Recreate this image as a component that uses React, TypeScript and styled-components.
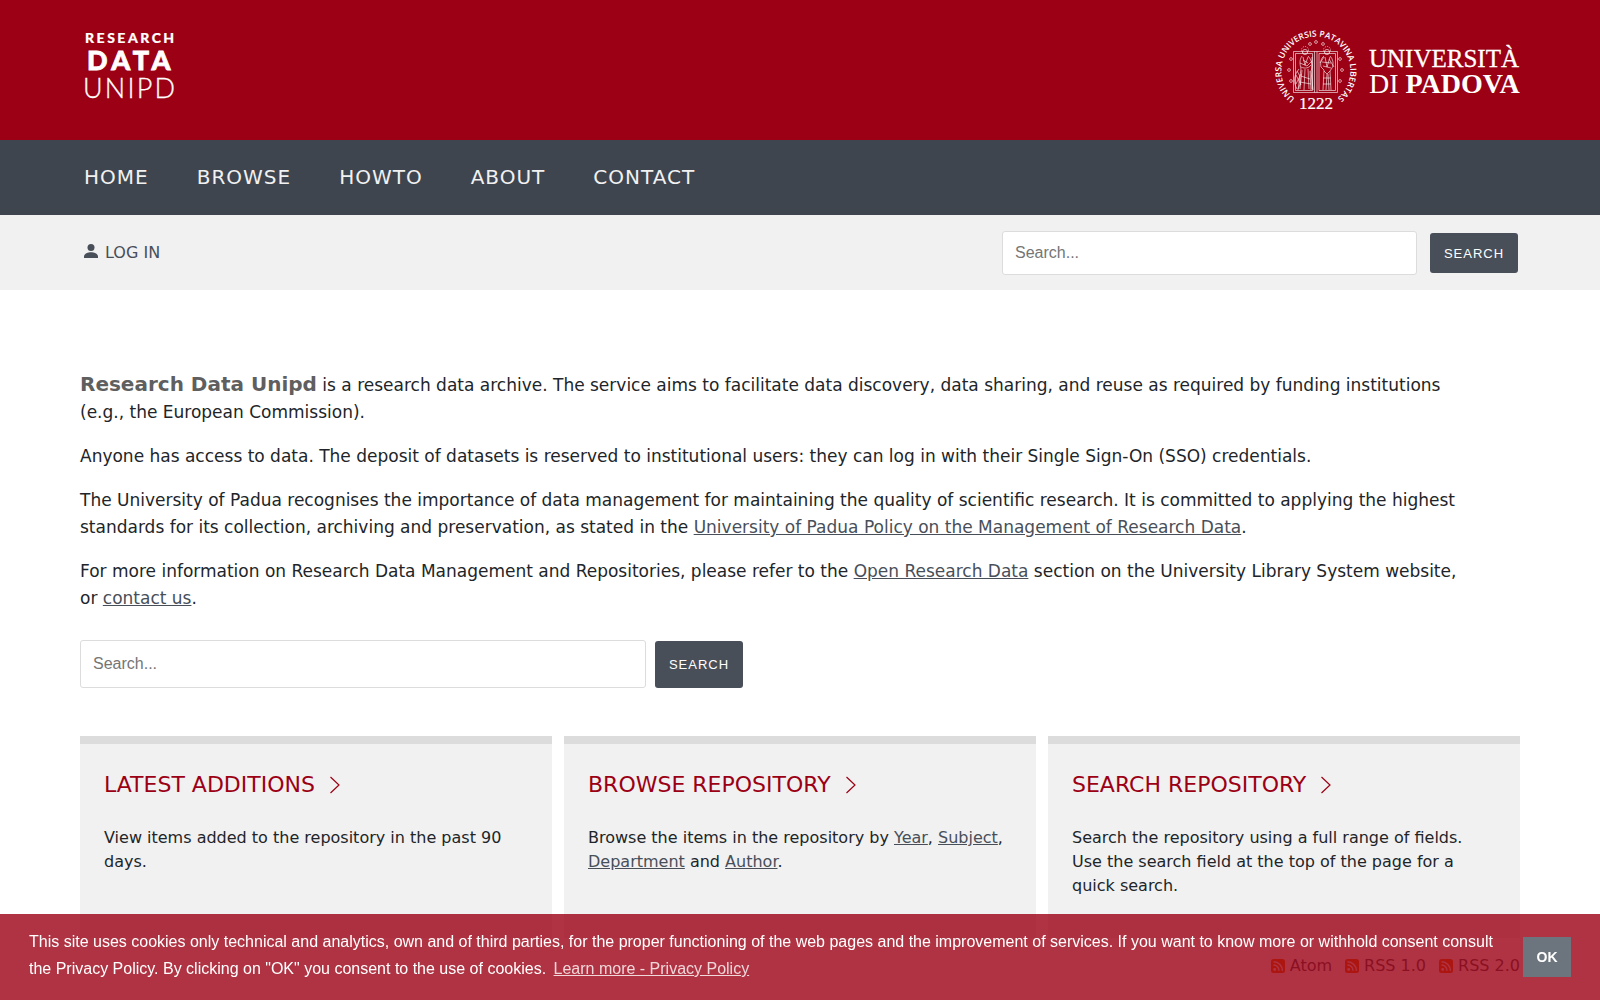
import React from "react";
import styled, { createGlobalStyle } from "styled-components";

const sans = `"DejaVu Sans", Verdana, sans-serif`;
const arial = `"Liberation Sans", Arial, Helvetica, sans-serif`;

const GlobalStyle = createGlobalStyle`
  *, *::before, *::after { box-sizing: border-box; }
  body {
    margin: 0;
    background: #fff;
    color: #212529;
    font-family: ${sans};
    font-size: 16px;
    line-height: 24px;
  }
`;

const Header = styled.header`
  display: flex;
  justify-content: space-between;
  align-items: flex-start;
  height: 140px;
  padding: 24px 80px;
  background: #9b0014;
`;

const LogoLink = styled.a`
  display: block;
  line-height: 0;
`;

const Nav = styled.nav`
  display: flex;
  align-items: center;
  gap: 48px;
  height: 75px;
  padding: 0 84px 2px;
  background: #3f454f;
`;

const NavLink = styled.a`
  color: #f1f1f1;
  font-size: 20px;
  letter-spacing: 1px;
  text-decoration: none;
  text-transform: uppercase;
`;

const UserBar = styled.div`
  display: flex;
  align-items: center;
  justify-content: space-between;
  height: 75px;
  padding: 0 82px 0 84px;
  background: #f1f1f1;
`;

const LoginLink = styled.a`
  display: flex;
  align-items: center;
  gap: 7px;
  color: #484f59;
  font-size: 16px;
  text-decoration: none;
`;

const SearchForm = styled.form<{ $gap: number }>`
  display: flex;
  align-items: center;
  gap: ${(p) => p.$gap}px;
`;

const SearchInput = styled.input<{ $tall?: boolean }>`
  width: ${(p) => (p.$tall ? 566 : 415)}px;
  height: ${(p) => (p.$tall ? 48 : 44)}px;
  padding: 0 12px;
  border: 1px solid #dcdcdc;
  border-radius: 3px;
  background: #fff;
  font-family: ${arial};
  font-size: 16px;

  &::placeholder {
    color: #757575;
  }
`;

const SearchButton = styled.button<{ $tall?: boolean }>`
  width: 88px;
  height: ${(p) => (p.$tall ? 47 : 40)}px;
  padding: 1px 0 0;
  border: 0;
  border-radius: 3px;
  background: #484f59;
  color: #fff;
  font-family: ${arial};
  font-size: 13px;
  letter-spacing: 1px;
  text-transform: uppercase;
`;

const Main = styled.main`
  padding: 81px 80px 0;
`;

const Intro = styled.p`
  margin: 0 0 17px;
  padding-right: 48px;
  font-size: 17px;
  line-height: 27px;
`;

const Brand = styled.strong`
  color: #5f5f5f;
  font-size: 20px;
`;

const TextLink = styled.a`
  color: #484f59;
  text-decoration: underline;
`;

const MainSearch = styled.div`
  margin: 28px 0 48px;
`;

const Cards = styled.div`
  display: grid;
  grid-template-columns: repeat(3, 1fr);
  gap: 12px;
`;

const Card = styled.section`
  padding: 24px 24px 40px;
  border-top: 8px solid #dcdcdc;
  background: #f1f1f1;
`;

const CardTitle = styled.h2`
  margin: 0 0 24px;
  font-size: 22px;
  font-weight: 400;
  line-height: 34px;
`;

const CardLink = styled.a`
  display: inline-flex;
  align-items: center;
  gap: 14px;
  color: #9b0014;
  text-decoration: none;
  text-transform: uppercase;
`;

const CardText = styled.p`
  margin: 0;
`;

const Feeds = styled.div`
  display: flex;
  justify-content: flex-end;
  gap: 13px;
  padding: 16px 0 40px;
`;

const FeedLink = styled.a`
  display: flex;
  align-items: center;
  gap: 5px;
  color: #484f59;
  text-decoration: none;
`;

const CookieBar = styled.div`
  position: fixed;
  right: 0;
  bottom: 0;
  left: 0;
  display: flex;
  align-items: center;
  gap: 16px;
  padding: 16px 29px;
  background: rgba(155, 0, 20, 0.8);
  color: #fff;
  font-family: ${arial};
  font-size: 16px;
  line-height: 24px;
`;

const CookieText = styled.span`
  flex: 1;
`;

const CookieLink = styled.a`
  display: inline-block;
  padding: 3px;
  color: inherit;
  opacity: 0.8;
  text-decoration: underline;
`;

const CookieButton = styled.button`
  width: 48px;
  height: 40px;
  padding: 0;
  border: 0;
  background: #6c757d;
  color: #fff;
  font-family: ${arial};
  font-size: 14px;
  font-weight: 700;
`;

const DataLogo = () => (
  <svg width="110" height="84" viewBox="0 0 110 84" fill="#fff" stroke="#fff" fontFamily="Lato, sans-serif" role="img" aria-label="Research Data Unipd">
    <text x="5" y="19" fontSize="14" fontWeight="900" letterSpacing="2.5" strokeWidth="0.2">RESEARCH</text>
    <text x="7" y="46" fontSize="27" fontWeight="900" letterSpacing="4.4" strokeWidth="0.8">DATA</text>
    <text x="3" y="74" fontSize="27" fontWeight="300" letterSpacing="2.2" strokeWidth="0.3">UNIPD</text>
  </svg>
);

const dots = [[50, 29], [56, 27], [63, 29], [31, 44], [29, 55], [31, 66], [80, 44], [82, 55], [80, 66]];

const SealLogo = () => (
  <svg width="256" height="96" viewBox="4 9 256 96" fill="#fff" role="img" aria-label="Università di Padova">
    <defs>
      <path id="ring" d="M 35 83.500 A 34.5 34.5 0 1 1 70 87.500" />
    </defs>
    <text fontFamily="Open Sans, sans-serif" fontSize="8.5" fontWeight="600">
      <textPath href="#ring">UNIVERSA UNIVERSIS PATAVINA LIBERTAS</textPath>
    </text>
    <g fill="none" stroke="#fff" strokeWidth="0.6">
      {dots.map(([x, y]) => (
        <circle key={`${x}-${y}`} cx={x} cy={y} r="1.4" />
      ))}
      <path d="M33.5 36.5H77.5V77.5H33.5ZM54.5 36.5V77.5M57 36.5V77.5M35.5 38.5H52.5V75.5H35.5ZM59 38.5H75.5V75.5H59Z" />
      <circle cx="45" cy="37" r="2.6" />
      <circle cx="45" cy="35" r="3.5" strokeDasharray="1 1" />
      <path d="M42 41c-3 4-2 9-1 13l-3 21M48 41c4 4 5 10 3 15l2 19M43 42l2 8 3-8M41 52c4 2 8 1 10-2M42 55l-2 19M45 54l-1 21M48 54l1 20M50 56l1 19M40 48l7 3 5-5M43 45l5 3M41 61l9 3M40 67l11 2M52 42v32" />
      <path d="M39 54c-5 6-6 13-2 20M37 56c4 6 5 11 1 18M36 60l5 10M41 59l-5 10" />
      <circle cx="67" cy="37" r="2.6" />
      <circle cx="67" cy="35" r="3.5" strokeDasharray="1 1" />
      <path d="M64 41c-3 2-4 7-3 11l3 3-1 20M70 41c3 3 4 8 2 12l-2 3 1 19M65 42l2 10 3-10M62 47l9 1M63 51l8 2M64 56l3 3 3-3M67 59l-1 16M68 59l1 16M60 48l4-6M74 52l-5-8M63 63h8M63 69h8" />
    </g>
    <text x="39" y="94" fontFamily="Liberation Serif, serif" fontSize="17" stroke="#fff" strokeWidth="0.2">1222</text>
    <g fontFamily="Liberation Serif, serif">
      <text x="109" y="52" fontSize="25" stroke="#fff" strokeWidth="0.3">UNIVERSITÀ</text>
      <text x="109" y="78" fontSize="28">DI <tspan fontWeight="700">PADOVA</tspan></text>
    </g>
  </svg>
);

const UserIcon = () => (
  <svg width="14" height="18" viewBox="0 0 14 18" fill="#484f59" aria-hidden="true">
    <circle cx="7" cy="3.5" r="3.5" />
    <path d="M0 14v-1.500C0 10 3.500 8.300 7 8.300s7 1.700 7 4.200V14Z" />
  </svg>
);

const Chevron = () => (
  <svg width="12" height="18" viewBox="0 0 12 18" fill="none" stroke="#9b0014" strokeWidth="1.2" aria-hidden="true">
    <path d="M1.500 1l8.500 8-8.500 8" />
  </svg>
);

const FeedIcon = () => (
  <svg width="14" height="14" viewBox="0 0 14 14" aria-hidden="true">
    <rect width="14" height="14" rx="2.500" fill="#f56a00" />
    <circle cx="3.700" cy="10.400" r="1.400" fill="#fff" />
    <path d="M2.500 6a5.500 5.500 0 0 1 5.500 5.800M2.500 2.800a9 9 0 0 1 9 9" fill="none" stroke="#fff" strokeWidth="1.500" />
  </svg>
);

const Search = ({ tall, gap }: { tall?: boolean; gap: number }) => (
  <SearchForm $gap={gap} role="search" onSubmit={(e) => e.preventDefault()}>
    <SearchInput $tall={tall} type="text" placeholder="Search..." aria-label="Search the archive" />
    <SearchButton $tall={tall} type="submit">Search</SearchButton>
  </SearchForm>
);

const CardHeading = ({ children }: { children: React.ReactNode }) => (
  <CardTitle>
    <CardLink href="#">
      {children}
      <Chevron />
    </CardLink>
  </CardTitle>
);

export default function App() {
  return (
    <>
      <GlobalStyle />
      <Header>
        <LogoLink href="#"><DataLogo /></LogoLink>
        <LogoLink href="#"><SealLogo /></LogoLink>
      </Header>
      <Nav>
        {["Home", "Browse", "HowTo", "About", "Contact"].map((label) => (
          <NavLink key={label} href="#">{label}</NavLink>
        ))}
      </Nav>
      <UserBar>
        <LoginLink href="#"><UserIcon />LOG IN</LoginLink>
        <Search gap={13} />
      </UserBar>
      <Main>
        <Intro>
          <Brand>Research Data Unipd</Brand> is a research data archive. The service aims to facilitate data discovery,
          data sharing, and reuse as required by funding institutions (e.g., the European Commission).
        </Intro>
        <Intro>
          Anyone has access to data. The deposit of datasets is reserved to institutional users: they can log in with
          their Single Sign-On (SSO) credentials.
        </Intro>
        <Intro>
          The University of Padua recognises the importance of data management for maintaining the quality of
          scientific research. It is committed to applying the highest standards for its collection, archiving and
          preservation, as stated in the{" "}
          <TextLink href="#">University of Padua Policy on the Management of Research Data</TextLink>.
        </Intro>
        <Intro>
          For more information on Research Data Management and Repositories, please refer to the{" "}
          <TextLink href="#">Open Research Data</TextLink> section on the University Library System website, or{" "}
          <TextLink href="#">contact us</TextLink>.
        </Intro>
        <MainSearch><Search tall gap={9} /></MainSearch>
        <Cards>
          <Card>
            <CardHeading>Latest Additions</CardHeading>
            <CardText>View items added to the repository in the past 90 days.</CardText>
          </Card>
          <Card>
            <CardHeading>Browse Repository</CardHeading>
            <CardText>
              Browse the items in the repository by <TextLink href="#">Year</TextLink>,{" "}
              <TextLink href="#">Subject</TextLink>, <TextLink href="#">Department</TextLink> and{" "}
              <TextLink href="#">Author</TextLink>.
            </CardText>
          </Card>
          <Card>
            <CardHeading>Search Repository</CardHeading>
            <CardText>
              Search the repository using a full range of fields. Use the search field at the top of the page for a
              quick search.
            </CardText>
          </Card>
        </Cards>
        <Feeds>
          {["Atom", "RSS 1.0", "RSS 2.0"].map((label) => (
            <FeedLink key={label} href="#"><FeedIcon />{label}</FeedLink>
          ))}
        </Feeds>
      </Main>
      <CookieBar role="region" aria-label="Cookie notice">
        <CookieText>
          This site uses cookies only technical and analytics, own and of third parties, for the proper functioning of
          the web pages and the improvement of services. If you want to know more or withhold consent consult the
          Privacy Policy. By clicking on "OK" you consent to the use of cookies.{" "}
          <CookieLink href="#">Learn more - Privacy Policy</CookieLink>
        </CookieText>
        <CookieButton type="button">OK</CookieButton>
      </CookieBar>
    </>
  );
}
